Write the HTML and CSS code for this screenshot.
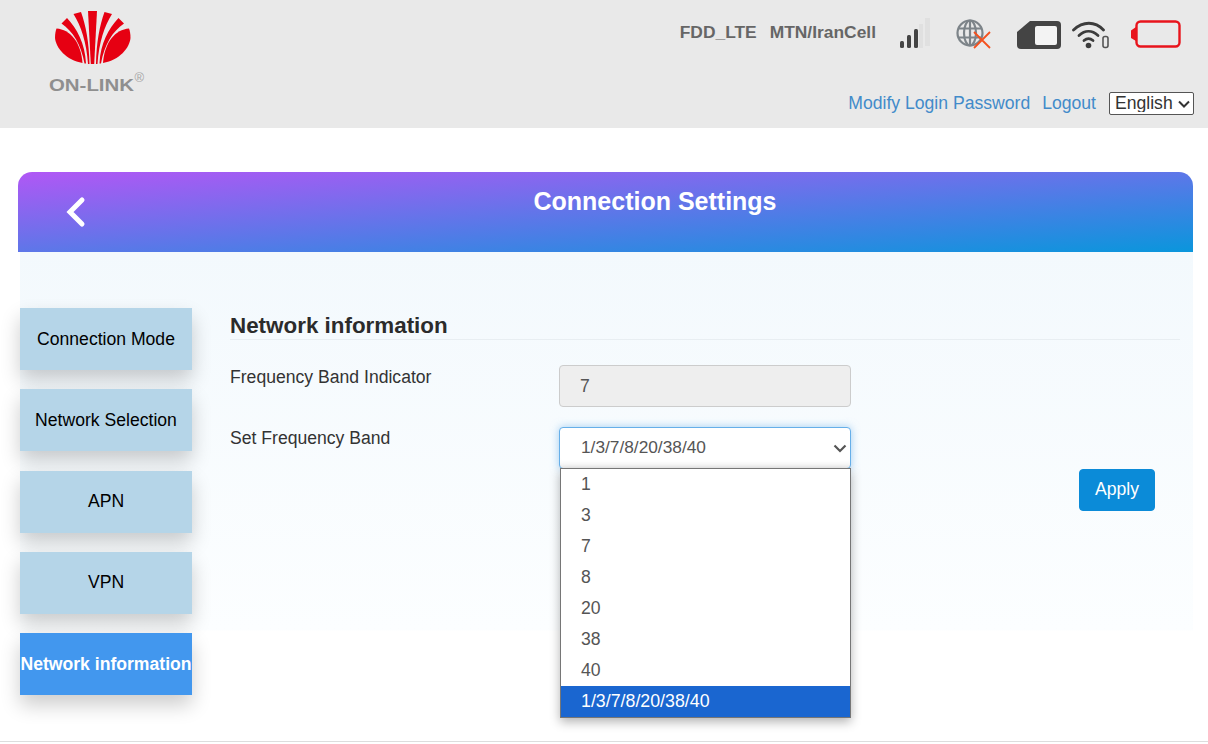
FILE: index.html
```html
<!DOCTYPE html>
<html lang="en">
<head>
<meta charset="utf-8">
<title>Connection Settings</title>
<link rel="stylesheet" href="styles.css">
</head>
<body>
<header class="topbar">
  <svg class="logo" viewBox="0 0 130 100" width="130" height="100" aria-label="ON-LINK">
    <g fill="#e60012">
      <g id="half">
        <path d="M37.500 28.500C51 29.500 62 42 63.500 63C47 60 37 48 36 38C36 34 36.500 31 37.500 28.500Z"/>
        <path d="M42.500 23.500L48 18C58 29 66 43 67 63.500L65.500 63.500C62 44 54 31.500 42.500 23.500Z"/>
        <path d="M54.500 14L62 12C67 26 70 42 70.500 64L69 64C67.500 42 62 26 54.500 14Z"/>
      </g>
      <use href="#half" transform="matrix(-1 0 0 1 147.500 0)"/>
      <path d="M69 11L78 11L75.200 64L71.800 64Z"/>
    </g>
    <text class="logo-name" x="30" y="91" textLength="85" lengthAdjust="spacingAndGlyphs">ON-LINK</text>
    <text class="logo-mark" x="115.500" y="82">®</text>
  </svg>
  <div class="top-right">
    <div class="status">
      <span class="status-text">FDD_LTE</span>
      <span class="status-text">MTN/IranCell</span>
      <svg class="ic-signal" viewBox="0 0 32 30" width="32" height="30">
        <g fill="#444"><rect x="1" y="23" width="4" height="7" rx="1.500"/><rect x="8" y="17" width="4" height="13" rx="1.500"/><rect x="15" y="11" width="4" height="19" rx="1.500"/></g>
        <g fill="#e0e0e0"><rect x="20" y="6" width="4" height="24"/><rect x="26" y="0" width="5" height="28"/></g>
      </svg>
      <svg class="ic-globe" viewBox="0 0 36 30" width="36" height="30">
        <g fill="none" stroke="#7d8489" stroke-width="2.200">
          <circle cx="14" cy="14" r="12.500"/>
          <ellipse cx="14" cy="14" rx="6" ry="12.500"/>
          <path d="M14 1V27M2 9.500H26M2 18.500H26"/>
        </g>
        <path d="M18 29L34 13M18 13L34 29" stroke="#f4511e" stroke-width="1.800" fill="none"/>
      </svg>
      <svg class="ic-sim" viewBox="0 0 44 28" width="44" height="28">
        <path d="M13 0H40Q44 0 44 4V24Q44 28 40 28H4Q0 28 0 24V11Z" fill="#444"/>
        <rect x="18" y="5" width="22" height="19" rx="2" fill="#f3f3f3"/>
      </svg>
      <svg class="ic-wifi" viewBox="0 0 38 28" width="38" height="28">
        <g fill="none" stroke="#3c3c3c" stroke-width="2.800" stroke-linecap="round">
          <path d="M1.500 9C11 0 23 0 31.500 9"/>
          <path d="M7 14.500C13 9 20 9 26 14.500"/>
          <path d="M12 19.500C15 17 18 17 21 19.500"/>
        </g>
        <circle cx="16.500" cy="24.500" r="2.800" fill="#3c3c3c"/>
        <rect x="31" y="15.500" width="5" height="11" rx="2" fill="none" stroke="#555" stroke-width="1.600"/>
      </svg>
      <svg class="ic-battery" viewBox="0 0 50 28" width="50" height="28">
        <path d="M0 10.500L5 7V21L0 18Z" fill="#e8141c"/>
        <rect x="5.500" y="1.500" width="43" height="25" rx="4" fill="none" stroke="#e8141c" stroke-width="2.400"/>
      </svg>
    </div>
    <nav class="account">
      <a href="#" class="account-link account-link-first">Modify Login Password</a>
      <a href="#" class="account-link">Logout</a>
      <select class="lang"><option>English</option></select>
    </nav>
  </div>
</header>

<main class="card">
  <div class="card-head">
    <a href="#" class="back" aria-label="Back">
      <svg viewBox="0 0 24 34" width="24" height="34"><path d="M20 5L8 17L20 29" fill="none" stroke="#fff" stroke-width="5" stroke-linecap="round" stroke-linejoin="miter"/></svg>
    </a>
    <h1 class="card-title">Connection Settings</h1>
  </div>
  <div class="card-body">
    <aside class="side">
      <a href="#" class="side-btn">Connection Mode</a>
      <a href="#" class="side-btn">Network Selection</a>
      <a href="#" class="side-btn">APN</a>
      <a href="#" class="side-btn">VPN</a>
      <a href="#" class="side-btn side-btn-active">Network information</a>
    </aside>
    <section class="content">
      <h2 class="section-title">Network information</h2>
      <div class="form-row form-row-first">
        <label class="form-label">Frequency Band Indicator</label>
        <div class="field-readonly">7</div>
      </div>
      <div class="form-row">
        <label class="form-label form-label-tight">Set Frequency Band</label>
        <div class="select-wrap">
          <select class="band-select"><option>1/3/7/8/20/38/40</option></select>
          <ul class="band-list">
            <li class="band-item">1</li>
            <li class="band-item">3</li>
            <li class="band-item">7</li>
            <li class="band-item">8</li>
            <li class="band-item">20</li>
            <li class="band-item">38</li>
            <li class="band-item">40</li>
            <li class="band-item band-item-selected">1/3/7/8/20/38/40</li>
          </ul>
        </div>
      </div>
      <div class="actions"><button class="apply" type="button">Apply</button></div>
    </section>
  </div>
</main>
<footer class="footer"></footer>
</body>
</html>
```
FILE: styles.css
```css
* { box-sizing: border-box; }
html, body { margin: 0; padding: 0; background: #fff; }
body { font-family: "Liberation Sans", Arial, sans-serif; font-size: 17.6px; color: #333; overflow: hidden; }

.topbar { height: 128px; background: #e9e9e9; display: flex; justify-content: space-between; padding-left: 19px; }
.logo { display: block; flex: none; }
.logo-name { font-family: "Liberation Sans", Arial, sans-serif; font-size: 16px; font-weight: 700; fill: #8f8f8f; }
.logo-mark { font-family: "Liberation Sans", Arial, sans-serif; font-size: 13px; fill: #a5a5a5; }

.top-right { display: flex; flex-direction: column; align-items: flex-end; padding-right: 14px; }
.status { display: flex; align-items: flex-start; height: 92px; padding-right: 13px; }
.status-text { font-weight: 700; font-size: 17.4px; color: #666; line-height: 20px; margin-top: 22px; margin-right: 13px; }
.ic-signal { margin: 18px 0 0 10px; }
.ic-globe { margin: 19px 0 0 25px; }
.ic-sim { margin: 21px 0 0 25px; }
.ic-wifi { margin: 21px 0 0 11px; }
.ic-battery { margin: 20px 0 0 21px; }

.account { display: flex; align-items: center; height: 23px; }
.account-link { color: #428bca; text-decoration: none; margin-right: 13px; }
.account-link-first { margin-right: 12px; }
.lang { appearance: none; width: 85px; height: 23px; font: 17.6px "Liberation Sans", Arial, sans-serif; color: #333; background: #fff url("data:image/svg+xml,%3Csvg xmlns='http://www.w3.org/2000/svg' width='12' height='8'%3E%3Cpath d='M1 1.500L6 6.500L11 1.500' fill='none' stroke='%23333' stroke-width='2'/%3E%3C/svg%3E") no-repeat right 3px center; border: 1px solid #555; border-radius: 2px; padding: 0 0 2px 5px; }

.card { margin: 44px 15px 0 18px; }
.card-head { height: 80px; border-radius: 14px 14px 0 0; background: linear-gradient(to bottom right, #b157f5 0%, #0a96dc 100%); display: grid; grid-template-columns: 99px 1fr; align-items: start; }
.back { display: block; margin: 23px 0 0 44px; height: 34px; }
.card-title { margin: 14px 0 0; text-align: center; color: #fff; font-size: 25px; font-weight: 700; line-height: 30px; }

.card-body { margin-left: 2px; padding: 56px 13px 46px 0; display: flex; background: linear-gradient(#f3f9fd 0, #fcfeff 378px, #fff 379px); }
.side { width: 172px; flex: none; display: flex; flex-direction: column; gap: 19.250px; }
.side-btn { height: 62px; display: flex; align-items: center; justify-content: center; white-space: nowrap; background: #b5d5e8; color: #000; text-decoration: none; box-shadow: 0 10px 20px rgba(0,0,0,.2); }
.side-btn-active { background: #4297ee; color: #fff; font-weight: 700; }

.content { flex: 1; margin-left: 38px; padding-top: 4px; }
.section-title { margin: 0; font-size: 22.400px; line-height: 27px; font-weight: 700; color: #2b2b2b; border-bottom: 1px solid #e8eef2; }
.form-row { display: flex; margin-top: 20px; }
.form-row-first { margin-top: 25px; }
.form-label { width: 329px; flex: none; line-height: 24px; color: #333; }
.form-label-tight { line-height: 22px; }
.field-readonly { width: 292px; height: 42px; padding: 0 20px; line-height: 40px; background: #eee; border: 1px solid #ccc; border-radius: 4px; color: #555; }
.select-wrap { position: relative; width: 292px; height: 42px; }
.band-select { appearance: none; display: block; width: 292px; height: 42px; padding: 0 16px 2px 21px; font: 17.3px "Liberation Sans", Arial, sans-serif; color: #555; background: #fff url("data:image/svg+xml,%3Csvg xmlns='http://www.w3.org/2000/svg' width='14' height='9'%3E%3Cpath d='M1.500 1.500L7 7L12.500 1.500' fill='none' stroke='%23555' stroke-width='2.200'/%3E%3C/svg%3E") no-repeat right 3px center; border: 1px solid #66afe9; border-radius: 4px; box-shadow: inset 0 -8px 8px -8px rgba(0,0,0,.12), 0 0 8px rgba(102,175,233,.6); outline: 0; }
.band-list { position: absolute; z-index: 2; top: 41px; left: 1px; width: 291px; margin: 0; padding: 0; list-style: none; background: #fff; border: 1px solid #767676; box-shadow: 0 4px 10px rgba(0,0,0,.3); }
.band-item { height: 31px; line-height: 31px; padding-left: 20px; color: #555; }
.band-item-selected { background: #1a66d0; color: #fff; font-size: 17.800px; }

.actions { display: flex; justify-content: flex-end; padding-right: 25px; }
.apply { width: 76px; height: 42px; padding: 0 0 2px; background: #0b8bd8; color: #fff; border: 1px solid #0b8bd8; border-radius: 4px; font: 17.6px "Liberation Sans", Arial, sans-serif; }

.footer { height: 3px; border-top: 1px solid #ddd; }
```
